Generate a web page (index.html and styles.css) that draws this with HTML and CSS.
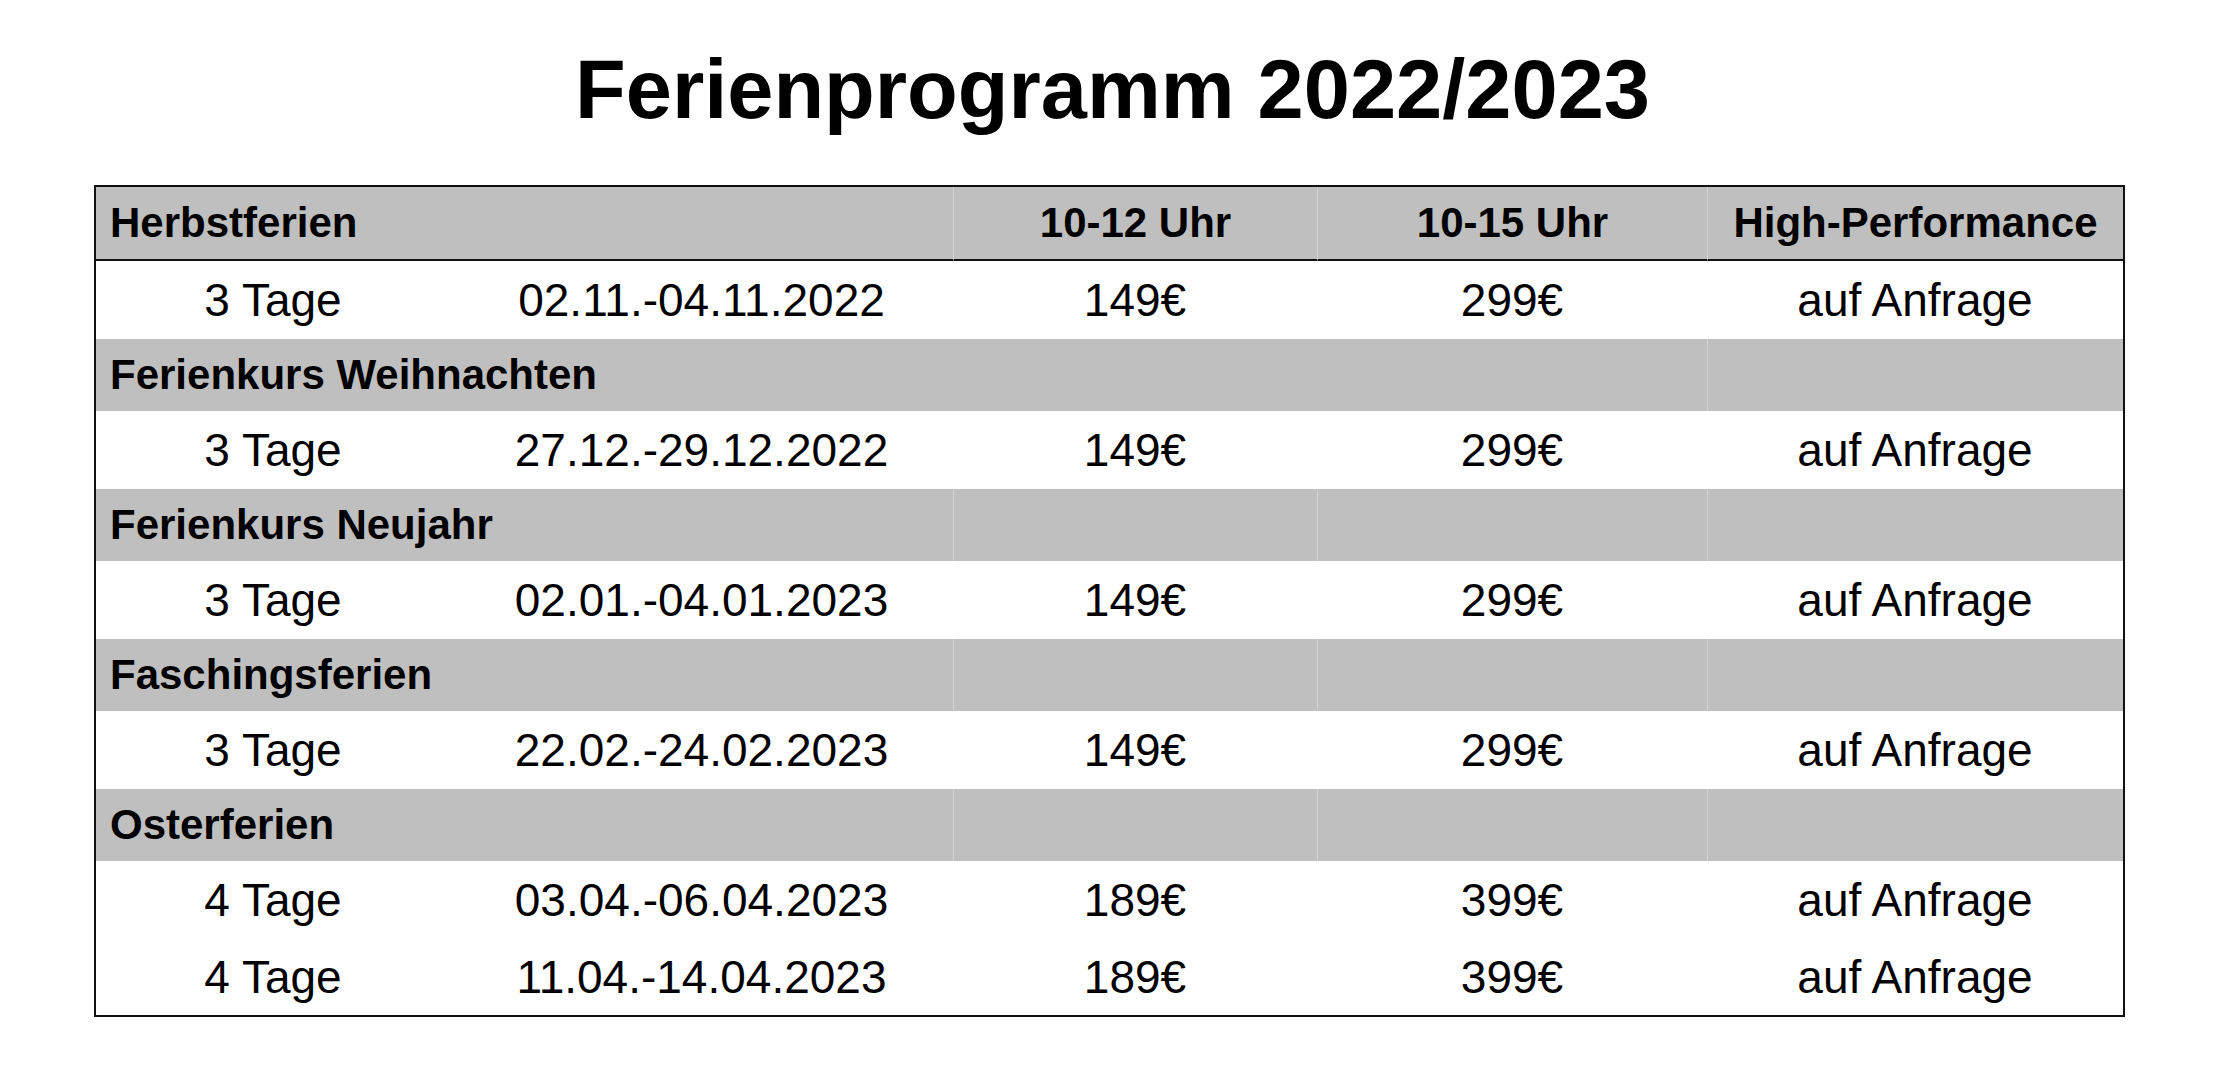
FILE: index.html
```html
<!DOCTYPE html>
<html lang="de">
<head>
<meta charset="utf-8">
<title>Ferienprogramm 2022/2023</title>
<link rel="stylesheet" href="styles.css">
</head>
<body>
<main class="page">
  <h1 class="title">Ferienprogramm 2022/2023</h1>
  <table class="program">
    <colgroup>
      <col class="c-days">
      <col class="c-dates">
      <col class="c-short">
      <col class="c-long">
      <col class="c-hp">
    </colgroup>
    <thead>
      <tr class="head">
        <th colspan="2" class="label">Herbstferien</th>
        <th class="div">10-12 Uhr</th>
        <th class="div">10-15 Uhr</th>
        <th class="div">High-Performance</th>
      </tr>
    </thead>
    <tbody>
      <tr class="data"><td>3 Tage</td><td>02.11.-04.11.2022</td><td>149€</td><td>299€</td><td>auf Anfrage</td></tr>
      <tr class="section"><th colspan="4" class="label">Ferienkurs Weihnachten</th><th class="div"></th></tr>
      <tr class="data"><td>3 Tage</td><td>27.12.-29.12.2022</td><td>149€</td><td>299€</td><td>auf Anfrage</td></tr>
      <tr class="section"><th colspan="2" class="label">Ferienkurs Neujahr</th><th class="div"></th><th class="div"></th><th class="div"></th></tr>
      <tr class="data"><td>3 Tage</td><td>02.01.-04.01.2023</td><td>149€</td><td>299€</td><td>auf Anfrage</td></tr>
      <tr class="section"><th colspan="2" class="label">Faschingsferien</th><th class="div"></th><th class="div"></th><th class="div"></th></tr>
      <tr class="data"><td>3 Tage</td><td>22.02.-24.02.2023</td><td>149€</td><td>299€</td><td>auf Anfrage</td></tr>
      <tr class="section"><th colspan="2" class="label">Osterferien</th><th class="div"></th><th class="div"></th><th class="div"></th></tr>
      <tr class="data"><td>4 Tage</td><td>03.04.-06.04.2023</td><td>189€</td><td>399€</td><td>auf Anfrage</td></tr>
      <tr class="data last"><td>4 Tage</td><td>11.04.-14.04.2023</td><td>189€</td><td>399€</td><td>auf Anfrage</td></tr>
    </tbody>
  </table>
</main>
</body>
</html>
```
FILE: styles.css
```css
html, body {
  margin: 0;
  padding: 0;
  background: #ffffff;
}

body {
  font-family: "Liberation Sans", Arial, sans-serif;
  color: #000000;
}

.page {
  padding-top: 48px;
}

.title {
  margin: 0 0 53px 0;
  font-size: 83px;
  line-height: 84px;
  font-weight: 700;
  text-align: center;
}

.program {
  margin-left: 94px;
  width: 2031px;
  box-sizing: border-box;
  table-layout: fixed;
  border-collapse: separate;
  border-spacing: 0;
  border: 2px solid #111111;
}

.c-days { width: 354px; }
.c-dates { width: 503px; }
.c-short { width: 364px; }
.c-long { width: 390px; }
.c-hp { width: 416px; }

.program th,
.program td {
  padding: 0;
  vertical-align: middle;
  white-space: nowrap;
}

.head th,
.section th {
  background: #bfbfbf;
  font-size: 42px;
  font-weight: 700;
  text-align: center;
}

.head th {
  height: 72px;
  border-bottom: 2px solid #111111;
}

.program th.label {
  text-align: left;
  padding-left: 14px;
}

.program th.div {
  border-left: 1px solid #d2d2d2;
}

.section th {
  height: 72px;
}

.data td {
  height: 78px;
  font-size: 46px;
  font-weight: 400;
  text-align: center;
  background: #ffffff;
}

.data.last td {
  height: 76px;
}
```
